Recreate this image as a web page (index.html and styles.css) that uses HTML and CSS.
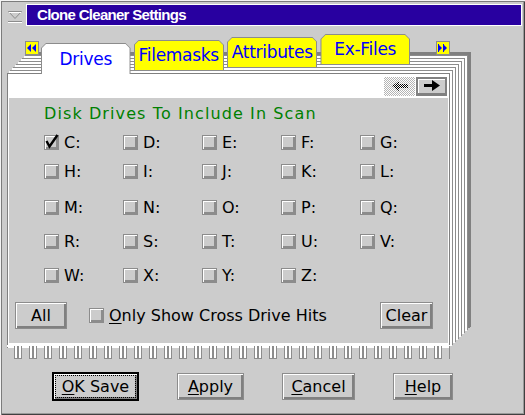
FILE: index.html
```html
<!DOCTYPE html>
<html lang="en">
<head>
    <meta charset="UTF-8">
    <title>Clone Cleaner Settings</title>
    <link rel="stylesheet" href="styles.css">
</head>
<body>

<div class="window">
    <div class="title-row">
        <svg class="sysmenu" width="16" height="14" viewBox="0 0 16 14">
            <polygon points="1.5,1.5 14.5,1.5 8,8.5" fill="none" stroke="#8c8c8c"/>
            <line x1="2" y1="2.5" x2="14" y2="2.5" stroke="#fff"/>
            <line x1="1" y1="11.5" x2="15" y2="11.5" stroke="#8c8c8c"/>
            <line x1="1" y1="12.5" x2="15" y2="12.5" stroke="#fff"/>
        </svg>
        <div class="titlebar">Clone Cleaner Settings</div>
    </div>

    <div class="notebook">
        <div class="tabs">
            <div class="tab-scroll scroll-left">
                <svg width="12" height="12" viewBox="0 0 12 12">
                    <polygon points="1,6 5,2 5,10" fill="#0000ff"/>
                    <polygon points="6,6 10,2 10,10" fill="#0000ff"/>
                </svg>
            </div>
            <div class="tab tab-active"><div class="tab-face">Drives</div></div>
            <div class="tab tab-2"><div class="tab-face">Filemasks</div></div>
            <div class="tab tab-3"><div class="tab-face">Attributes</div></div>
            <div class="tab tab-4"><div class="tab-face">Ex-Files</div></div>
            <div class="tab-scroll scroll-right">
                <svg width="12" height="12" viewBox="0 0 12 12">
                    <rect x="1" y="2" width="1" height="8" fill="#0000ff"/>
                    <polygon points="2,3 5,6 2,9" fill="#0000ff"/>
                    <rect x="6" y="2" width="1" height="8" fill="#0000ff"/>
                    <polygon points="7,3 10,6 7,9" fill="#0000ff"/>
                </svg>
            </div>
        </div>

        <div class="page">
            <div class="page-strip">
                <div class="page-btn page-btn-off">
                    <svg width="20" height="12" viewBox="0 0 20 12">
                        <defs>
                            <pattern id="dots" width="2" height="2" patternUnits="userSpaceOnUse">
                                <rect width="1" height="1" fill="#000"/>
                                <rect x="1" y="1" width="1" height="1" fill="#000"/>
                            </pattern>
                        </defs>
                        <polygon points="2,6 9,1 9,4 18,4 18,8 9,8 9,11" fill="url(#dots)"/>
                    </svg>
                </div>
                <div class="page-btn page-btn-on">
                    <svg width="18" height="11" viewBox="0 0 18 11">
                        <rect x="1" y="4" width="10" height="3" fill="#000"/>
                        <polygon points="9,0 17,5.5 9,11" fill="#000"/>
                    </svg>
                </div>
            </div>

            <div class="page-body">
                <h3 class="group-title">Disk Drives To Include In Scan</h3>

                <div class="drive-grid">
                    <label class="check"><span class="box checked"><svg width="14" height="15" viewBox="0 0 14 15"><polyline points="1.5,7 4.5,12.5 12.5,1" fill="none" stroke="#000" stroke-width="2.4"/></svg></span>C:</label>
                    <label class="check"><span class="box"></span>D:</label>
                    <label class="check"><span class="box"></span>E:</label>
                    <label class="check"><span class="box"></span>F:</label>
                    <label class="check"><span class="box"></span>G:</label>
                    <label class="check"><span class="box"></span>H:</label>
                    <label class="check"><span class="box"></span>I:</label>
                    <label class="check"><span class="box"></span>J:</label>
                    <label class="check"><span class="box"></span>K:</label>
                    <label class="check"><span class="box"></span>L:</label>
                    <label class="check"><span class="box"></span>M:</label>
                    <label class="check"><span class="box"></span>N:</label>
                    <label class="check"><span class="box"></span>O:</label>
                    <label class="check"><span class="box"></span>P:</label>
                    <label class="check"><span class="box"></span>Q:</label>
                    <label class="check"><span class="box"></span>R:</label>
                    <label class="check"><span class="box"></span>S:</label>
                    <label class="check"><span class="box"></span>T:</label>
                    <label class="check"><span class="box"></span>U:</label>
                    <label class="check"><span class="box"></span>V:</label>
                    <label class="check"><span class="box"></span>W:</label>
                    <label class="check"><span class="box"></span>X:</label>
                    <label class="check"><span class="box"></span>Y:</label>
                    <label class="check"><span class="box"></span>Z:</label>
                </div>

                <div class="page-actions">
                    <button class="btn btn-all">All</button>
                    <label class="check cross-hits"><span class="box"></span><u>O</u>nly Show Cross Drive Hits</label>
                    <button class="btn btn-clear">Clear</button>
                </div>
            </div>
        </div>

        <svg class="spiral" width="443" height="15" viewBox="0 0 443 15">
            <defs>
                <pattern id="ring" x="6" y="0" width="15" height="15" patternUnits="userSpaceOnUse">
                    <rect x="0" y="0" width="10" height="2" fill="#fff"/>
                    <rect x="1" y="1" width="4" height="13" fill="#8c8c8c"/>
                    <rect x="2" y="1" width="2" height="12" fill="#fff"/>
                    <rect x="5" y="1" width="4" height="13" fill="#8c8c8c"/>
                    <rect x="6" y="1" width="2" height="12" fill="#fff"/>
                </pattern>
            </defs>
            <rect x="0" y="0" width="443" height="15" fill="url(#ring)"/>
        </svg>
    </div>

    <div class="dialog-buttons">
        <button class="btn btn-default"><span class="focus"><u>O</u>K Save</span></button>
        <button class="btn btn-apply"><u>A</u>pply</button>
        <button class="btn btn-cancel"><u>C</u>ancel</button>
        <button class="btn btn-help"><u>H</u>elp</button>
    </div>
</div>

</body>
</html>
```

FILE: styles.css
```css
/* Reset some default styles */
* {
    box-sizing: border-box;
    margin: 0;
    padding: 0;
}

body {
    font-family: "DejaVu Sans", sans-serif;
    font-size: 16px;
    background-color: #cccccc;
}

.window {
    width: 525px;
    height: 415px;
    background-color: #cccccc;
    box-shadow: inset 1px 1px 0 #f4f4f4, inset 2px 2px 0 #7c7c7c, inset -1px -1px 0 #404040, inset -2px -2px 0 #9a9a9a;
    overflow: hidden;
}

/* title bar */
.title-row {
    display: flex;
    align-items: flex-start;
    padding: 4px 3px 0 0;
}

.sysmenu {
    margin: 6px 3px 0 7px;
}

.titlebar {
    flex: 1;
    height: 22px;
    background-color: #2800a0;
    border: 1px solid #ffffff;
    color: #ffffff;
    font-family: "Liberation Sans", Arial, sans-serif;
    font-weight: bold;
    font-size: 15px;
    letter-spacing: -0.7px;
    line-height: 19px;
    padding-left: 10px;
}

/* notebook */
.notebook {
    margin-top: 8px;
    margin-left: 7px;
    width: 443px;
}

.tabs {
    display: flex;
    align-items: flex-end;
    padding-left: 18px;
    position: relative;
    z-index: 2;
}

.tab-scroll {
    width: 14px;
    height: 14px;
    background-color: #ffff00;
    border: 1px solid #8c8c8c;
    margin-bottom: 18px;
    display: flex;
    align-items: center;
    justify-content: center;
}

.scroll-left {
    margin-right: 2px;
}

.scroll-right {
    margin-left: 26px;
}

.tab {
    width: 95px;
    height: 31px;
    background-color: #8c8c8c;
    padding: 1px;
    margin-right: 3px;
    clip-path: polygon(5px 0, calc(100% - 5px) 0, 100% 5px, 100% 100%, 0 100%, 0 5px);
}

.tab-face {
    height: 100%;
    background-color: #ffff00;
    color: #0000ff;
    font-size: 17px;
    letter-spacing: -0.3px;
    text-align: center;
    line-height: 28px;
    clip-path: polygon(4px 0, calc(100% - 4px) 0, 100% 4px, 100% 100%, 0 100%, 0 4px);
}

.tab-active {
    width: 94px;
    padding-bottom: 0;
    margin-bottom: -1px;
}

.tab-active .tab-face {
    background-color: #ffffff;
    line-height: 30px;
}

.tab-2 { margin-bottom: 2px; }
.tab-3 { margin-bottom: 5px; }
.tab-4 { width: 94px; margin-bottom: 8px; margin-right: 0; }

/* page with the stack of pages behind it */
.page {
    position: relative;
    z-index: 1;
    background-color: #ffffff;
    border: 1px solid #808080;
    border-bottom: none;
    padding: 0 1px 5px;
    box-shadow:
        2px -2px 0 #ffffff, 3px -3px 0 #8c8c8c,
        5px -5px 0 #ffffff, 6px -6px 0 #8c8c8c,
        8px -8px 0 #ffffff, 9px -9px 0 #8c8c8c,
        11px -11px 0 #ffffff, 12px -12px 0 #8c8c8c,
        14px -14px 0 #ffffff, 15px -15px 0 #8c8c8c,
        17px -17px 0 #ffffff, 18px -18px 0 #8c8c8c,
        20px -20px 0 #808080, 21px -21px 0 #808080;
}

.page-strip {
    height: 24px;
    display: flex;
    justify-content: flex-end;
    align-items: center;
    padding-right: 1px;
}

.page-btn {
    width: 31px;
    height: 19px;
    display: flex;
    align-items: center;
    justify-content: center;
}

.page-btn-off {
    background: repeating-conic-gradient(#b4b4b4 0 25%, #ffffff 0 50%) 0 0 / 2px 2px;
    margin-right: 1px;
}

.page-btn-on {
    background-color: #cccccc;
    border: 2px solid #808080;
    border-bottom-width: 3px;
    box-shadow: inset 1px 1px 0 #ffffff;
}

.page-body {
    height: 245px;
    background-color: #cccccc;
    padding-top: 7px;
}

.group-title {
    font-size: 16px;
    font-weight: normal;
    color: #008000;
    line-height: 18px;
    letter-spacing: 1.1px;
    padding-left: 35px;
}

.drive-grid {
    display: grid;
    grid-template-columns: repeat(5, 79px);
    grid-template-rows: 29px 36px 34px 34px 20px;
    margin-top: 9px;
    padding-left: 35px;
}

.check {
    display: flex;
    align-items: center;
    height: 20px;
    color: #000000;
}

.box {
    position: relative;
    width: 15px;
    height: 15px;
    margin-right: 5px;
    border: 1px solid #8c8c8c;
    box-shadow: inset 1px 1px 0 #ffffff, inset -2px -2px 0 #8c8c8c;
}

.box svg {
    position: absolute;
    left: 0;
    top: -2px;
    overflow: visible;
}

.page-actions {
    display: flex;
    align-items: center;
    margin-top: 17px;
    padding: 0 15px 0 6px;
}

.btn {
    font-family: "DejaVu Sans", sans-serif;
    font-size: 16px;
    color: #000000;
    height: 27px;
    background-color: #cccccc;
    border: 1px solid #8c8c8c;
    box-shadow: inset 1px 1px 0 #ffffff, inset -2px -2px 0 #808080;
}

.btn-all { width: 52px; }
.btn-clear { width: 53px; margin-left: auto; }

.cross-hits {
    margin-left: 22px;
}

u {
    text-decoration-thickness: 1px;
    text-underline-offset: 2px;
}

.spiral {
    display: block;
    margin-top: -3px;
    position: relative;
    z-index: 1;
}

/* dialog buttons */
.dialog-buttons {
    display: flex;
    align-items: center;
    gap: 38px;
    height: 29px;
    margin-top: 12px;
    padding-left: 52px;
}

.btn-default {
    width: 87px;
    height: 29px;
    border: 2px solid #000000;
    padding: 1px;
}

.btn-default .focus {
    display: block;
    height: 100%;
    border: 1px dotted #000000;
    line-height: 21px;
}

.btn-apply { width: 67px; }
.btn-cancel { width: 73px; }
.btn-help { width: 60px; }
```
